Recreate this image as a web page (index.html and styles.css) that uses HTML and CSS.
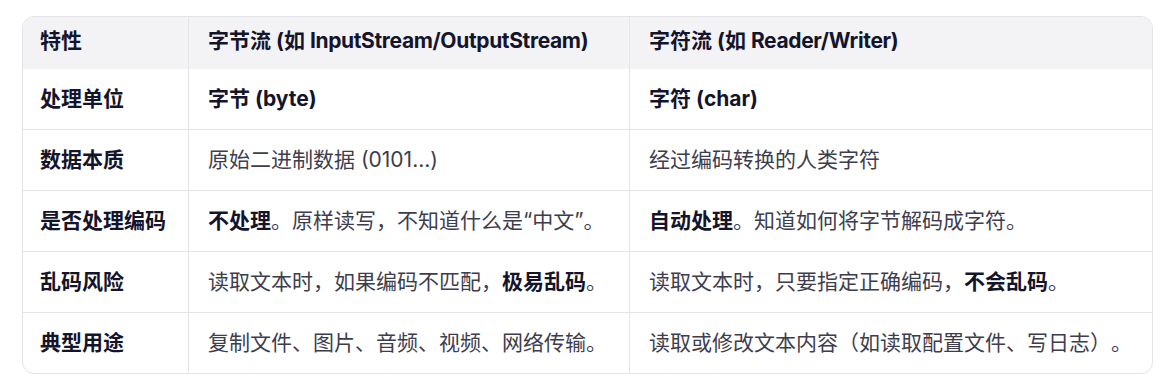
FILE: index.html
```html
<!DOCTYPE html>
<html lang="zh-CN">
<head>
<meta charset="utf-8">
<link rel="stylesheet" href="styles.css">
</head>
<body>
<div class="page">
  <div class="table-wrap">
    <table class="cmp">
      <colgroup>
        <col class="c1"><col class="c2"><col class="c3">
      </colgroup>
      <thead>
        <tr>
          <th>特性</th>
          <th>字节流 (如 <span class="lat">InputStream/OutputStream)</span></th>
          <th>字符流 (如 <span class="lat">Reader/Writer)</span></th>
        </tr>
      </thead>
      <tbody>
        <tr>
          <td class="key">处理单位</td>
          <td><b>字节 (byte)</b></td>
          <td><b>字符 (char)</b></td>
        </tr>
        <tr>
          <td class="key">数据本质</td>
          <td>原始二进制数据 (0101...)</td>
          <td>经过编码转换的人类字符</td>
        </tr>
        <tr>
          <td class="key">是否处理编码</td>
          <td><b>不处理</b>。原样读写，不知道什么是“中文”。</td>
          <td><b>自动处理</b>。知道如何将字节解码成字符。</td>
        </tr>
        <tr>
          <td class="key">乱码风险</td>
          <td>读取文本时，如果编码不匹配，<b>极易乱码</b>。</td>
          <td>读取文本时，只要指定正确编码，<b>不会乱码</b>。</td>
        </tr>
        <tr>
          <td class="key">典型用途</td>
          <td>复制文件、图片、音频、视频、网络传输。</td>
          <td>读取或修改文本内容（如读取配置文件、写日志）。</td>
        </tr>
      </tbody>
    </table>
  </div>
</div>
</body>
</html>
```

FILE: styles.css
```css
html, body {
  margin: 0;
  padding: 0;
  background: #ffffff;
}

.page {
  padding: 16px 20px 0 22px;
  font-family: Inter, "Noto Sans CJK SC", "Noto Sans", sans-serif;
  font-size: 21px;
  line-height: 30px;
  color: #3d3d4e;
  text-spacing-trim: space-all;
}

.table-wrap {
  border: 1px solid #e3e3e8;
  border-radius: 12px;
  overflow: hidden;
}

.cmp {
  width: 100%;
  border-collapse: separate;
  border-spacing: 0;
  table-layout: fixed;
}

.c1 { width: 165px; }
.c2 { width: 441px; }
.c3 { width: auto; }

.cmp th,
.cmp td {
  text-align: left;
  padding: 15px 16px 15px 17px;
  vertical-align: middle;
  white-space: nowrap;
}

.cmp th + th,
.cmp td + td {
  border-left: 1px solid #e3e3e8;
  padding-left: 19px;
}

.cmp thead th {
  background: #f3f3f6;
  padding-top: 9px;
  padding-bottom: 13px;
  font-weight: 700;
  color: #14142b;
}

.lat {
  letter-spacing: -0.35px;
}

.cmp tbody td {
  border-top: 1px solid #e3e3e8;
}

.cmp tbody tr:first-child td {
  border-top: none;
}

.cmp td.key,
.cmp b {
  font-weight: 700;
  color: #14142b;
}
```
